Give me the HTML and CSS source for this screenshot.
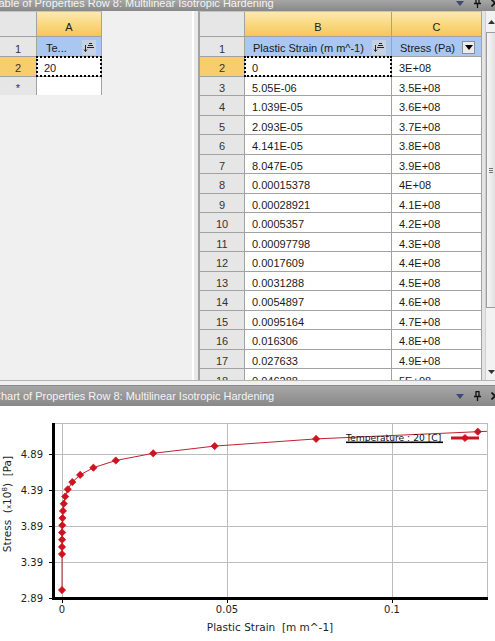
FILE: index.html
```html
<!DOCTYPE html>
<html>
<head>
<meta charset="utf-8">
<link rel="stylesheet" href="styles.css">
</head>
<body>
<div class="titlebar top-bar">
  <span class="title">Table of Properties Row 8: Multilinear Isotropic Hardening</span>
  <div class="tools">
    <svg class="ico-drop" width="8" height="5" viewBox="0 0 8 5"><path d="M0 0H8L4 5Z" fill="#3c4a7a"/></svg>
    <svg class="ico-pin" width="9" height="10" viewBox="0 0 9 10"><path d="M2.5 0.5H6.5M3 0.5V5.5M6 0.5V5.5M1 5.5H8M4.5 5.5V10" stroke="#111" stroke-width="1.3" fill="none"/></svg>
    <svg class="ico-x" width="8" height="8" viewBox="0 0 8 8"><path d="M0.5 0.5L7.5 7.5M7.5 0.5L0.5 7.5" stroke="#111" stroke-width="1.6"/></svg>
  </div>
</div>

<div class="panes">
  <div class="left-pane">
    <div class="grid grid-a">
      <div class="c rn corner"></div>
      <div class="c colhead">A</div>
      <div class="c rn">1</div>
      <div class="c fieldhead"><span class="fh-text">Te...</span>
        <svg class="sort" width="14" height="15" viewBox="0 0 14 15"><rect x="0" y="0" width="14" height="15" fill="#c9d3df"/><path d="M7 3.5H10M6 5.5H11M5 7.5H12M3.5 5V11.5M2 9.5L3.5 11.5L5 9.5" stroke="#222" stroke-width="1" fill="none"/></svg>
      </div>
      <div class="c rn sel">2</div>
      <div class="c val focus">20</div>
      <div class="c rn">*</div>
      <div class="c val"></div>
    </div>
  </div>
  <div class="splitter"></div>
  <div class="right-pane">
    <div class="table-clip">
      <div class="grid grid-bc">
        <div class="c rn corner"></div>
        <div class="c colhead">B</div>
        <div class="c colhead">C</div>

        <div class="c rn">1</div>
        <div class="c fieldhead"><span class="fh-text">Plastic Strain (m m^-1)</span>
          <svg class="sort" width="14" height="15" viewBox="0 0 14 15"><rect x="0" y="0" width="14" height="15" fill="#c9d3df"/><path d="M7 3.5H10M6 5.5H11M5 7.5H12M3.5 5V11.5M2 9.5L3.5 11.5L5 9.5" stroke="#222" stroke-width="1" fill="none"/></svg>
        </div>
        <div class="c fieldhead"><span class="fh-text">Stress (Pa)</span>
          <span class="dropbtn"><svg width="8" height="5" viewBox="0 0 8 5"><path d="M0 0H8L4 5Z" fill="#000"/></svg></span>
        </div>

        <div class="c rn sel">2</div><div class="c val focus">0</div><div class="c val">3E+08</div>
        <div class="c rn">3</div><div class="c val">5.05E-06</div><div class="c val">3.5E+08</div>
        <div class="c rn">4</div><div class="c val">1.039E-05</div><div class="c val">3.6E+08</div>
        <div class="c rn">5</div><div class="c val">2.093E-05</div><div class="c val">3.7E+08</div>
        <div class="c rn">6</div><div class="c val">4.141E-05</div><div class="c val">3.8E+08</div>
        <div class="c rn">7</div><div class="c val">8.047E-05</div><div class="c val">3.9E+08</div>
        <div class="c rn">8</div><div class="c val">0.00015378</div><div class="c val">4E+08</div>
        <div class="c rn">9</div><div class="c val">0.00028921</div><div class="c val">4.1E+08</div>
        <div class="c rn">10</div><div class="c val">0.0005357</div><div class="c val">4.2E+08</div>
        <div class="c rn">11</div><div class="c val">0.00097798</div><div class="c val">4.3E+08</div>
        <div class="c rn">12</div><div class="c val">0.0017609</div><div class="c val">4.4E+08</div>
        <div class="c rn">13</div><div class="c val">0.0031288</div><div class="c val">4.5E+08</div>
        <div class="c rn">14</div><div class="c val">0.0054897</div><div class="c val">4.6E+08</div>
        <div class="c rn">15</div><div class="c val">0.0095164</div><div class="c val">4.7E+08</div>
        <div class="c rn">16</div><div class="c val">0.016306</div><div class="c val">4.8E+08</div>
        <div class="c rn">17</div><div class="c val">0.027633</div><div class="c val">4.9E+08</div>
        <div class="c rn">18</div><div class="c val">0.046288</div><div class="c val">5E+08</div>
      </div>
    </div>
    <div class="scroll-gap"></div>
    <div class="scrollbar">
      <div class="sb-btn"><svg width="7" height="4" viewBox="0 0 7 4"><path d="M0 4H7L3.5 0Z" fill="#333"/></svg></div>
      <div class="sb-thumb"><span class="grip"></span></div>
      <div class="sb-track"></div>
      <div class="sb-btn"><svg width="7" height="4" viewBox="0 0 7 4"><path d="M0 0H7L3.5 4Z" fill="#333"/></svg></div>
    </div>
  </div>
</div>

<div class="titlebar chart-bar">
  <span class="title">Chart of Properties Row 8: Multilinear Isotropic Hardening</span>
  <div class="tools">
    <svg class="ico-drop" width="8" height="5" viewBox="0 0 8 5"><path d="M0 0H8L4 5Z" fill="#3c4a7a"/></svg>
    <svg class="ico-pin" width="9" height="10" viewBox="0 0 9 10"><path d="M2.5 0.5H6.5M3 0.5V5.5M6 0.5V5.5M1 5.5H8M4.5 5.5V10" stroke="#111" stroke-width="1.3" fill="none"/></svg>
    <svg class="ico-x" width="8" height="8" viewBox="0 0 8 8"><path d="M0.5 0.5L7.5 7.5M7.5 0.5L0.5 7.5" stroke="#111" stroke-width="1.6"/></svg>
  </div>
</div>

<div class="chart">
  <svg class="plot" width="495" height="236" viewBox="0 405 495 236">
    <defs>
      <path id="mk" d="M0 -3.6L3.6 0L0 3.6L-3.6 0Z" fill="#d0121f" stroke="#d0121f" stroke-width="0.8" stroke-linejoin="round"/>
    </defs>
    <g stroke="#bcbcbc" stroke-width="1">
      <line x1="55" y1="422.5" x2="488" y2="422.5"/>
      <line x1="55" y1="453.5" x2="488" y2="453.5"/>
      <line x1="55" y1="489.5" x2="488" y2="489.5"/>
      <line x1="55" y1="525.5" x2="488" y2="525.5"/>
      <line x1="55" y1="561.5" x2="488" y2="561.5"/>
      <line x1="62.5" y1="422" x2="62.5" y2="597"/>
      <line x1="227.5" y1="422" x2="227.5" y2="597"/>
      <line x1="392.5" y1="422" x2="392.5" y2="597"/>
      <line x1="487.5" y1="422" x2="487.5" y2="597"/>
    </g>
    <g stroke="#000" stroke-width="1">
      <line x1="49" y1="453.5" x2="52" y2="453.5"/>
      <line x1="49" y1="489.5" x2="52" y2="489.5"/>
      <line x1="49" y1="525.5" x2="52" y2="525.5"/>
      <line x1="49" y1="561.5" x2="52" y2="561.5"/>
      <line x1="49" y1="597.5" x2="52" y2="597.5"/>
      <line x1="62.5" y1="599" x2="62.5" y2="602"/>
      <line x1="227.5" y1="599" x2="227.5" y2="602"/>
      <line x1="392.5" y1="599" x2="392.5" y2="602"/>
    </g>
    <rect x="52" y="422" width="3" height="177" fill="#000"/>
    <rect x="52" y="596" width="436" height="3" fill="#000"/>

    <g class="ticklabel" text-anchor="end">
      <text x="43" y="456.5">4.89</text>
      <text x="43" y="492.5">4.39</text>
      <text x="43" y="528.5">3.89</text>
      <text x="43" y="564.5">3.39</text>
      <text x="43" y="600.5">2.89</text>
    </g>
    <g class="ticklabel" text-anchor="middle">
      <text x="62" y="612">0</text>
      <text x="227" y="612">0.05</text>
      <text x="392" y="612">0.1</text>
    </g>
    <text class="axistitle" x="270" y="630" text-anchor="middle" xml:space="preserve">Plastic Strain  [m m^-1]</text>
    <text class="axistitle" transform="translate(10.5 503) rotate(-90)" text-anchor="middle" xml:space="preserve">Stress  (<tspan font-size="7">x</tspan>10<tspan font-size="7" dy="-4">8</tspan><tspan dy="4">)  [Pa]</tspan></text>

    <polyline fill="none" stroke="#c22030" stroke-width="1" points="62,589.1 62.02,553.1 62.03,545.9 62.07,538.7 62.14,531.5 62.27,524.3 62.51,517.1 62.95,509.9 63.77,502.7 65.23,495.5 67.81,488.3 72.33,481.1 80.12,473.9 93.4,466.7 115.8,459.5 153.2,452.3 214.7,445.1 316.1,437.9 477.8,430.7 487,430.3"/>
    <g>
      <use href="#mk" x="62" y="589.1"/>
      <use href="#mk" x="62.02" y="553.1"/>
      <use href="#mk" x="62.03" y="545.9"/>
      <use href="#mk" x="62.07" y="538.7"/>
      <use href="#mk" x="62.14" y="531.5"/>
      <use href="#mk" x="62.27" y="524.3"/>
      <use href="#mk" x="62.51" y="517.1"/>
      <use href="#mk" x="62.95" y="509.9"/>
      <use href="#mk" x="63.77" y="502.7"/>
      <use href="#mk" x="65.23" y="495.5"/>
      <use href="#mk" x="67.81" y="488.3"/>
      <use href="#mk" x="72.33" y="481.1"/>
      <use href="#mk" x="80.12" y="473.9"/>
      <use href="#mk" x="93.4" y="466.7"/>
      <use href="#mk" x="115.8" y="459.5"/>
      <use href="#mk" x="153.2" y="452.3"/>
      <use href="#mk" x="214.7" y="445.1"/>
      <use href="#mk" x="316.1" y="437.9"/>
      <use href="#mk" x="477.8" y="430.7"/>
    </g>

    <text class="legend" x="346" y="440" xml:space="preserve">Temperature : 20 [C]</text>
    <rect x="346" y="440.5" width="97" height="1.6" fill="#000"/>
    <line x1="451" y1="437" x2="479" y2="437" stroke="#c8141f" stroke-width="3"/>
    <use href="#mk" x="465" y="437"/>
  </svg>
</div>
</body>
</html>
```
FILE: styles.css
```css
* { box-sizing: border-box; }

html, body {
  margin: 0;
  padding: 0;
}

body {
  width: 495px;
  height: 641px;
  overflow: hidden;
  background: #f0f0f0;
  font-family: "Liberation Sans", Arial, sans-serif;
  font-size: 11px;
  color: #1a1a1a;
}

/* ---------- title bars ---------- */
.titlebar {
  display: flex;
  overflow: hidden;
  color: #f4f4f4;
  font-size: 11px;
  background: linear-gradient(#a6a6a6, #888888);
}

.title {
  flex: 1;
  white-space: nowrap;
  margin-left: -7px;
}

.tools {
  display: flex;
  align-items: center;
  gap: 9px;
  margin-right: -4px;
}

.top-bar {
  height: 11px;
}
.top-bar .title {
  margin-top: -5px;
  line-height: 16px;
}
.top-bar .tools {
  margin-top: -4px;
  align-self: flex-start;
  height: 14px;
}

.chart-bar {
  height: 21px;
  margin-top: 4px;
  border-top: 1px solid #8a8a8a;
}
.chart-bar .title {
  line-height: 20px;
}

/* ---------- panes ---------- */
.panes {
  display: flex;
  height: 370px;
  overflow: hidden;
  border-bottom: 1px solid #b4b4b4;
}

.left-pane {
  width: 195px;
  background: #f0f0f0;
  border-right: 2px solid #ffffff;
}

.splitter {
  width: 4px;
  background: #e9e9e9;
}

.right-pane {
  flex: 1;
  display: flex;
  border-left: 1px solid #a4a4a4;
  background: #f0f0f0;
}

.table-clip {
  height: 369px;
  overflow: hidden;
}

/* ---------- grids ---------- */
.grid {
  display: grid;
  gap: 1px;
  background: #a2a2a2;
  border-top: 1px solid #c4c4c4;
  border-right: 1px solid #a2a2a2;
  grid-template-rows: 24px 19px;
  grid-auto-rows: 18.53px;
}

.grid-a {
  grid-template-columns: 36px 64px;
  width: 102px;
}

.grid-bc {
  grid-template-columns: 44px 146px 89px;
  border-left: 1px solid #a2a2a2;
}

.c {
  display: flex;
  align-items: center;
  padding-top: 4px;
  white-space: nowrap;
  overflow: hidden;
  position: relative;
}

.rn {
  justify-content: center;
  background: #e6e6e6;
  color: #333;
}

.rn.sel {
  background: #f7cd6e;
}

.corner {
  background: #e6e6e6;
}

.colhead {
  justify-content: center;
  padding-top: 5px;
  background: linear-gradient(#fde8b2, #f9d981 50%, #f5c65c);
  color: #222;
}

.fieldhead {
  background: #a9c7f0;
  padding-left: 8px;
  padding-right: 5px;
  padding-top: 3px;
  justify-content: space-between;
  color: #1a1a1a;
}

.grid-a .fieldhead {
  padding-left: 9px;
}

.sort {
  flex: none;
  margin-top: -2px;
}

.dropbtn {
  width: 13px;
  height: 13px;
  border: 1px solid #8e8e8e;
  background: #ececec;
  display: flex;
  align-items: center;
  justify-content: center;
  margin-right: 1px;
  margin-top: -2px;
}

.val {
  background: #ffffff;
  padding-left: 7px;
}

.focus {
  outline: 2px dotted #000;
  outline-offset: -1px;
  z-index: 1;
}

/* ---------- scrollbar ---------- */
.scroll-gap {
  width: 3px;
  background: #e4e4e4;
}

.scrollbar {
  flex: 1;
  display: flex;
  flex-direction: column;
  background: #f2f2f2;
  border-left: 1px solid #cfcfcf;
  padding-top: 2px;
}

.sb-btn {
  height: 17px;
  display: flex;
  align-items: center;
  justify-content: center;
  padding-left: 2px;
}

.sb-thumb {
  height: 276px;
  margin-top: 2px;
  border: 1px solid #9c9c9c;
  border-right: none;
  background: linear-gradient(90deg, #f6f6f6, #e2e2e2);
  display: flex;
  align-items: center;
  justify-content: center;
}

.grip {
  width: 4px;
  height: 5px;
  border-top: 1px solid #777;
  border-bottom: 1px solid #777;
  position: relative;
}
.grip::after {
  content: "";
  position: absolute;
  left: 0;
  right: 0;
  top: 1px;
  border-top: 1px solid #777;
}

.sb-track {
  flex: 1;
}

/* ---------- chart ---------- */
.chart {
  height: 236px;
  background: #ffffff;
}

.plot {
  display: block;
  font-family: "DejaVu Sans", Verdana, sans-serif;
}

.ticklabel {
  font-size: 10px;
  fill: #1e1e1e;
}

.axistitle {
  font-size: 10.5px;
  fill: #1e1e1e;
}

.legend {
  font-size: 9.2px;
  fill: #111;
}
```
